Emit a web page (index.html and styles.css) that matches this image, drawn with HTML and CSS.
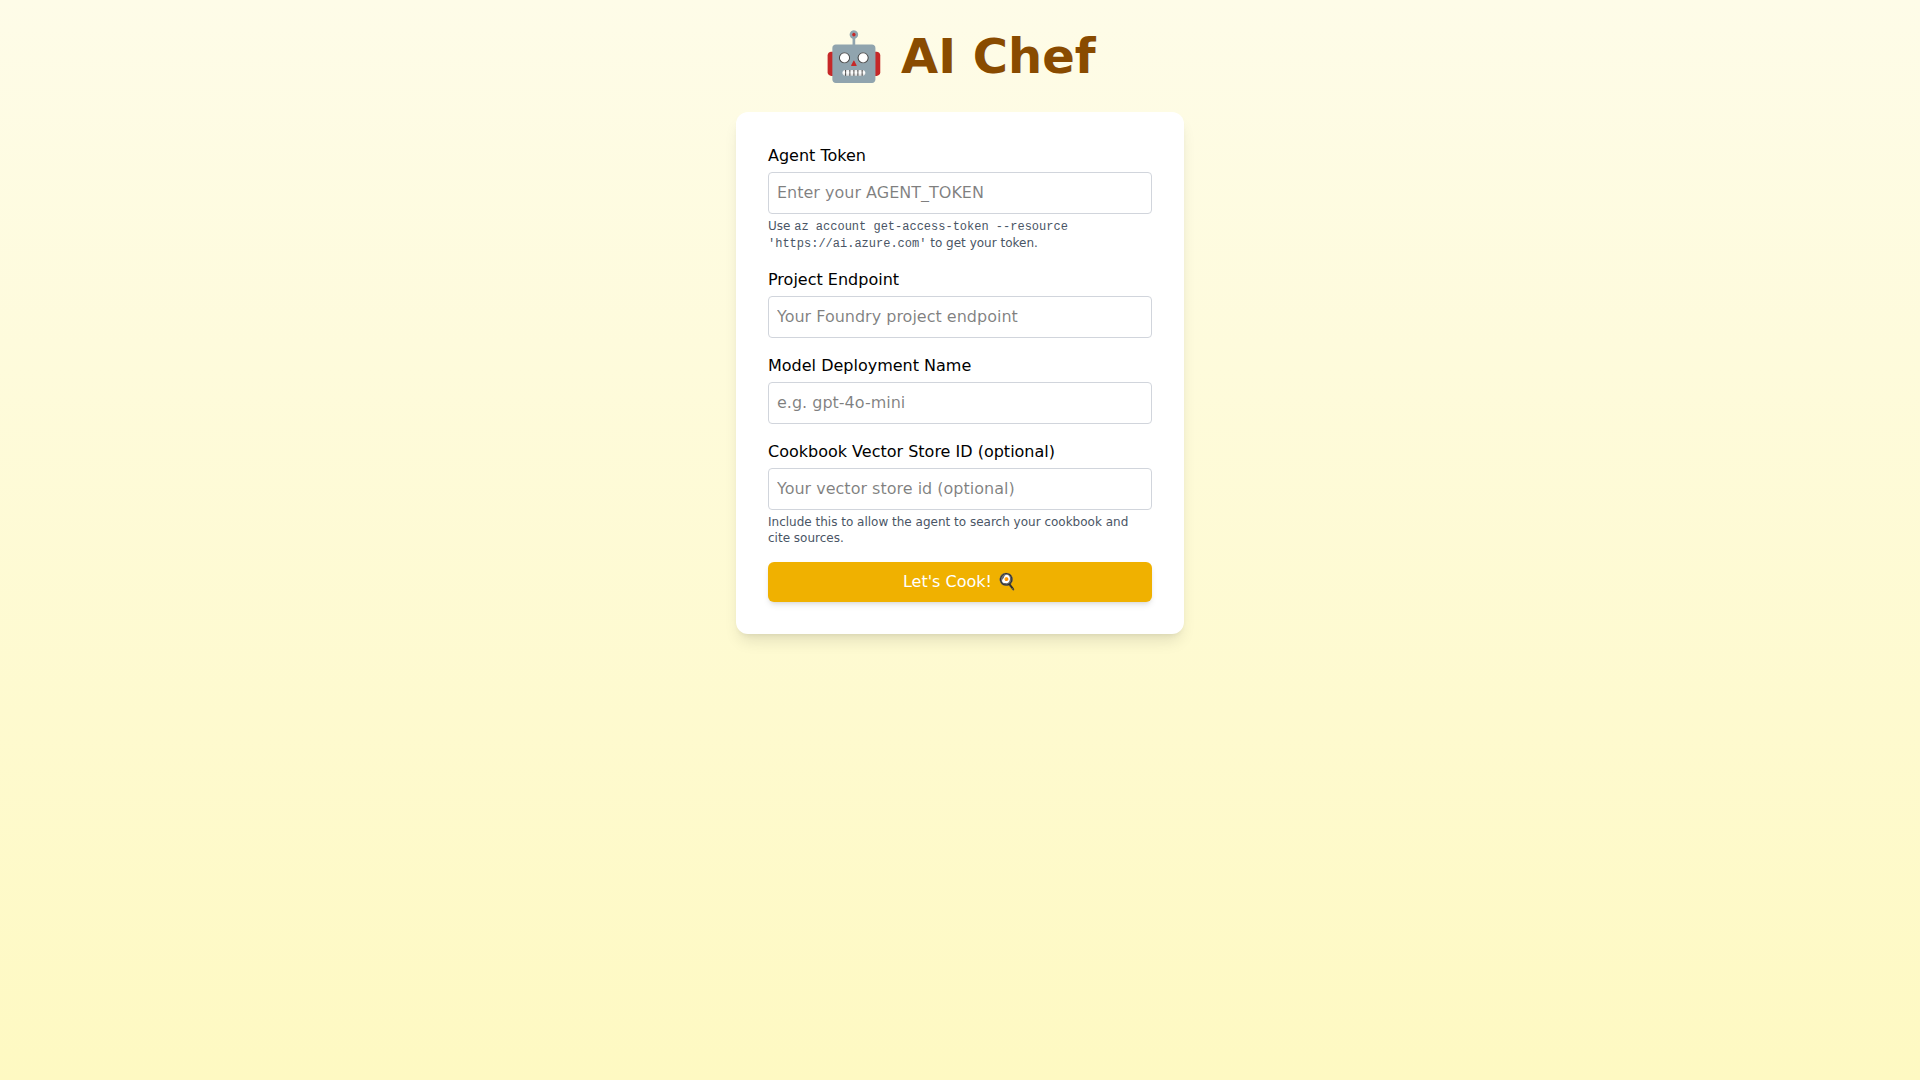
FILE: index.html
```html
<!DOCTYPE html>
<html lang="en">
<head>
    <meta charset="UTF-8">
    <meta name="viewport" content="width=device-width, initial-scale=1.0">
    <title>AI Chef</title>
    <link rel="stylesheet" href="styles.css">
</head>
<body>

<h1>🤖 AI Chef</h1>

<form class="card">
    <div class="field">
        <label for="token">Agent Token</label>
        <input id="token" type="text" placeholder="Enter your AGENT_TOKEN">
        <p class="hint">Use <code>az account get-access-token --resource 'https://ai.azure.com'</code> to get your token.</p>
    </div>

    <div class="field">
        <label for="endpoint">Project Endpoint</label>
        <input id="endpoint" type="text" placeholder="Your Foundry project endpoint">
    </div>

    <div class="field">
        <label for="model">Model Deployment Name</label>
        <input id="model" type="text" placeholder="e.g. gpt-4o-mini">
    </div>

    <div class="field">
        <label for="vector-store">Cookbook Vector Store ID (optional)</label>
        <input id="vector-store" type="text" placeholder="Your vector store id (optional)">
        <p class="hint">Include this to allow the agent to search your cookbook and cite sources.</p>
    </div>

    <button class="cook-button" type="button">Let's Cook! 🍳</button>
</form>

</body>
</html>
```
FILE: styles.css
```css
* {
    box-sizing: border-box;
}

body {
    display: flex;
    flex-direction: column;
    align-items: center;
    min-height: 100vh;
    margin: 0;
    padding: 32px 16px;
    font-family: "DejaVu Sans", sans-serif;
    font-size: 16px;
    line-height: 24px;
    color: #000;
    background: linear-gradient(to bottom, #fefce8, #fef9c2);
}

h1 {
    margin: 0 0 32px;
    font-size: 48px;
    line-height: 48px;
    color: #894b00;
}

.card {
    width: 100%;
    max-width: 448px;
    padding: 32px;
    border-radius: 12px;
    background-color: #fff;
    box-shadow: 0 10px 15px -3px rgba(0, 0, 0, 0.1), 0 4px 6px -4px rgba(0, 0, 0, 0.1);
}

.field {
    margin-bottom: 16px;
}

label {
    display: block;
    margin-bottom: 4px;
}

input {
    display: block;
    width: 100%;
    padding: 8px;
    border: 1px solid #d1d5dc;
    border-radius: 4px;
    font: inherit;
}

input::placeholder {
    color: rgba(0, 0, 0, 0.5);
}

.hint {
    margin: 4px 0 0;
    font-size: 12px;
    line-height: 16px;
    color: #4a5565;
}

.hint code {
    font-family: "Liberation Mono", monospace;
    font-size: 12px;
}

.cook-button {
    width: 100%;
    padding: 8px 16px;
    border: none;
    border-radius: 6px;
    background-color: #f0b100;
    color: #fff;
    font: inherit;
    cursor: pointer;
    box-shadow: 0 4px 6px -1px rgba(0, 0, 0, 0.1), 0 2px 4px -2px rgba(0, 0, 0, 0.1);
}

.cook-button:hover {
    background-color: #d08700;
}
```
